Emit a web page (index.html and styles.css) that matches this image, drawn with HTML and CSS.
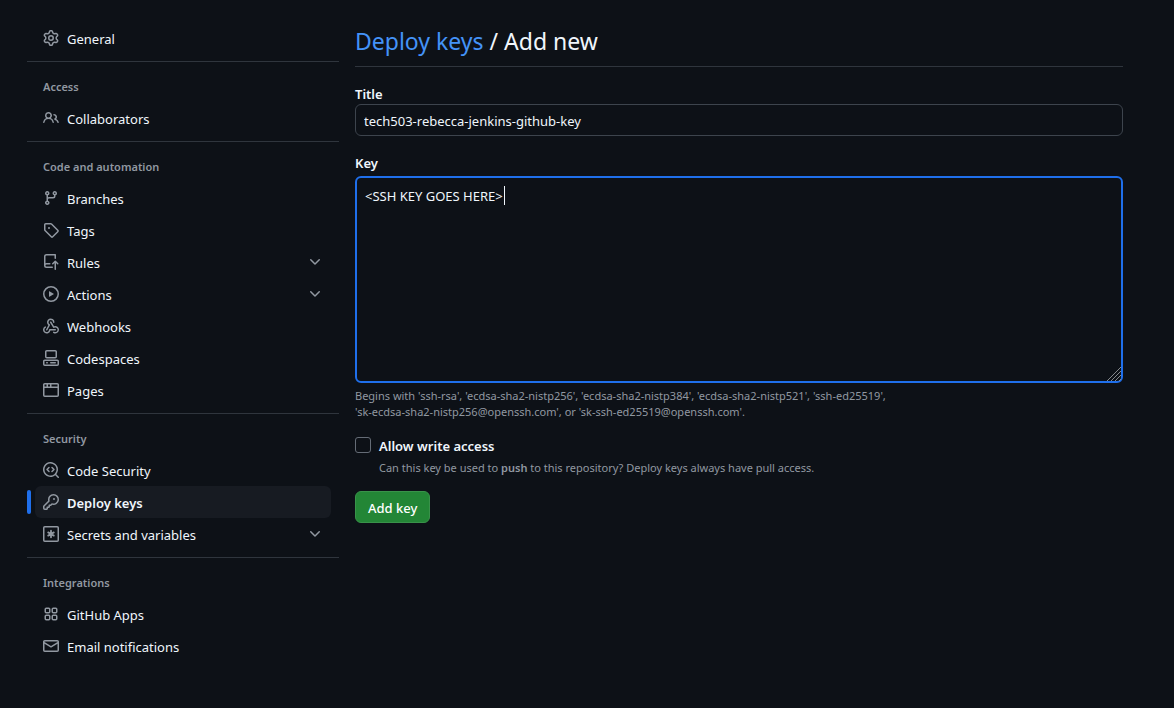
FILE: index.html
```
<!DOCTYPE html>
<html lang="en">
<head>
<meta charset="utf-8">
<meta name="viewport" content="width=device-width, initial-scale=1">
<title>Deploy keys / Add new</title>
<link rel="stylesheet" href="styles.css">
</head>
<body>
<svg class="sprite" aria-hidden="true">
  <symbol id="gear" viewBox="0 0 16 16"><path d="M8 0a8.2 8.2 0 0 1 .701.031C9.444.095 9.99.645 10.16 1.29l.288 1.107c.018.066.079.158.212.224.231.114.454.243.668.386.123.082.233.09.299.071l1.103-.303c.644-.176 1.392.021 1.82.63.27.385.506.792.704 1.218.315.675.111 1.422-.364 1.891l-.814.806c-.049.048-.098.147-.088.294.016.257.016.515 0 .772-.01.147.038.246.088.294l.814.806c.475.469.679 1.216.364 1.891a7.977 7.977 0 0 1-.704 1.217c-.428.61-1.176.807-1.82.63l-1.102-.302c-.067-.019-.177-.011-.3.071a5.909 5.909 0 0 1-.668.386c-.133.066-.194.158-.211.224l-.29 1.106c-.168.646-.715 1.196-1.458 1.26a8.006 8.006 0 0 1-1.402 0c-.743-.064-1.289-.614-1.458-1.26l-.289-1.106c-.018-.066-.079-.158-.212-.224a5.738 5.738 0 0 1-.668-.386c-.123-.082-.233-.09-.299-.071l-1.103.303c-.644.176-1.392-.021-1.82-.63a8.12 8.12 0 0 1-.704-1.218c-.315-.675-.111-1.422.363-1.891l.815-.806c.05-.048.098-.147.088-.294a6.214 6.214 0 0 1 0-.772c.01-.147-.038-.246-.088-.294l-.815-.806C.635 6.045.431 5.298.746 4.623a7.92 7.92 0 0 1 .704-1.217c.428-.61 1.176-.807 1.82-.63l1.102.302c.067.019.177.011.3-.071.214-.143.437-.272.668-.386.133-.066.194-.158.211-.224l.29-1.106C6.009.645 6.556.095 7.299.03 7.53.01 7.764 0 8 0Zm-.571 1.525c-.036.003-.108.036-.137.146l-.289 1.105c-.147.561-.549.967-.998 1.189-.173.086-.34.183-.5.29-.417.278-.97.423-1.529.27l-1.103-.303c-.109-.03-.175.016-.195.045-.22.312-.412.644-.573.99-.014.031-.021.11.059.19l.815.806c.411.406.562.957.53 1.456a4.709 4.709 0 0 0 0 .582c.032.499-.119 1.05-.53 1.456l-.815.806c-.081.08-.073.159-.059.19.162.346.353.677.573.989.02.03.085.076.195.046l1.102-.303c.56-.153 1.113-.008 1.53.27.161.107.328.204.501.29.447.222.85.629.997 1.189l.289 1.105c.029.109.101.143.137.146a6.6 6.6 0 0 0 1.142 0c.036-.003.108-.036.137-.146l.289-1.105c.147-.561.549-.967.998-1.189.173-.086.34-.183.5-.29.417-.278.97-.423 1.529-.27l1.103.303c.109.029.175-.016.195-.045.22-.313.411-.644.573-.99.014-.031.021-.11-.059-.19l-.815-.806c-.411-.406-.562-.957-.53-1.456a4.709 4.709 0 0 0 0-.582c-.032-.499.119-1.05.53-1.456l.815-.806c.081-.08.073-.159.059-.19a6.464 6.464 0 0 0-.573-.989c-.02-.03-.085-.076-.195-.046l-1.102.303c-.56.153-1.113.008-1.53-.27a4.44 4.44 0 0 0-.501-.29c-.447-.222-.85-.629-.997-1.189l-.289-1.105c-.029-.11-.101-.143-.137-.146a6.6 6.6 0 0 0-1.142 0ZM11 8a3 3 0 1 1-6 0 3 3 0 0 1 6 0ZM9.5 8a1.5 1.5 0 1 0-3.001.001A1.5 1.5 0 0 0 9.5 8Z"/></symbol>
  <symbol id="people" viewBox="0 0 16 16"><path d="M2 5.5a3.5 3.5 0 1 1 5.898 2.549 5.508 5.508 0 0 1 3.034 4.084.75.75 0 1 1-1.482.235 4 4 0 0 0-7.9 0 .75.75 0 0 1-1.482-.236A5.507 5.507 0 0 1 3.102 8.05 3.493 3.493 0 0 1 2 5.5ZM11 4a3.001 3.001 0 0 1 2.22 5.018 5.01 5.01 0 0 1 2.56 3.012.749.749 0 0 1-.885.954.752.752 0 0 1-.549-.514 3.507 3.507 0 0 0-2.522-2.372.75.75 0 0 1-.574-.73v-.352a.75.75 0 0 1 .416-.672A1.5 1.5 0 0 0 11 5.5.75.75 0 0 1 11 4Zm-5.5-.5a2 2 0 1 0-.001 3.999A2 2 0 0 0 5.5 3.5Z"/></symbol>
  <symbol id="branch" viewBox="0 0 16 16"><path d="M9.5 3.25a2.25 2.25 0 1 1 3 2.122V6A2.5 2.5 0 0 1 10 8.5H6a1 1 0 0 0-1 1v1.128a2.251 2.251 0 1 1-1.5 0V5.372a2.25 2.25 0 1 1 1.5 0v1.836A2.493 2.493 0 0 1 6 7h4a1 1 0 0 0 1-1v-.628A2.25 2.25 0 0 1 9.5 3.25Zm-6 0a.75.75 0 1 0 1.5 0 .75.75 0 0 0-1.5 0Zm8.25-.75a.75.75 0 1 0 0 1.5.75.75 0 0 0 0-1.5ZM4.25 12a.75.75 0 1 0 0 1.5.75.75 0 0 0 0-1.5Z"/></symbol>
  <symbol id="tag" viewBox="0 0 16 16"><path d="M1 7.775V2.75C1 1.784 1.784 1 2.75 1h5.025c.464 0 .91.184 1.238.513l6.25 6.25a1.75 1.75 0 0 1 0 2.474l-5.026 5.026a1.75 1.75 0 0 1-2.474 0l-6.25-6.25A1.752 1.752 0 0 1 1 7.775Zm1.5 0c0 .066.026.13.073.177l6.25 6.25a.25.25 0 0 0 .354 0l5.025-5.025a.25.25 0 0 0 0-.354l-6.25-6.25a.25.25 0 0 0-.177-.073H2.75a.25.25 0 0 0-.25.25ZM6 5a1 1 0 1 1 0 2 1 1 0 0 1 0-2Z"/></symbol>
  <symbol id="rules" viewBox="0 0 16 16"><path d="M1 2.5A2.5 2.5 0 0 1 3.5 0h8.75a.75.75 0 0 1 .75.75v3.5a.75.75 0 0 1-1.5 0V1.5h-8a1 1 0 0 0-1 1v6.708A2.493 2.493 0 0 1 3.5 9h3.25a.75.75 0 0 1 0 1.5H3.5a1 1 0 0 0 0 2h5.75a.75.75 0 0 1 0 1.5H3.5A2.5 2.5 0 0 1 1 11.5Zm13.23 7.79h-.001l-1.224-1.224v6.184a.75.75 0 0 1-1.5 0V9.066L10.28 10.29a.75.75 0 0 1-1.06-1.061l2.505-2.504a.75.75 0 0 1 1.06 0L15.29 9.23a.751.751 0 0 1-.018 1.042.751.751 0 0 1-1.042.018Z"/></symbol>
  <symbol id="play" viewBox="0 0 16 16"><path d="M8 0a8 8 0 1 1 0 16A8 8 0 0 1 8 0ZM1.5 8a6.5 6.5 0 1 0 13 0 6.5 6.5 0 0 0-13 0Zm4.879-2.773 4.264 2.559a.25.25 0 0 1 0 .428l-4.264 2.559A.25.25 0 0 1 6 10.559V5.442a.25.25 0 0 1 .379-.215Z"/></symbol>
  <symbol id="webhook" viewBox="0 0 16 16"><path d="M5.5 4.25a2.25 2.25 0 0 1 4.5 0 .75.75 0 0 0 1.5 0 3.75 3.75 0 1 0-6.14 2.889l-2.272 4.258a.75.75 0 0 0 1.324.706L7 7.25a.75.75 0 0 0-.309-1.015A2.25 2.25 0 0 1 5.5 4.25Z"/><path d="M7.364 3.607a.75.75 0 0 1 1.03.257l2.608 4.349a3.75 3.75 0 1 1-.628 6.785.75.75 0 0 1 .752-1.299 2.25 2.25 0 1 0-.033-3.88.75.75 0 0 1-1.03-.256L7.107 4.636a.75.75 0 0 1 .257-1.03Z"/><path d="M2.9 8.776A.75.75 0 0 1 2.625 9.8 2.25 2.25 0 1 0 6 11.75a.75.75 0 0 1 .75-.751h5.5a.75.75 0 0 1 0 1.5H7.425a3.751 3.751 0 1 1-5.55-3.998.75.75 0 0 1 1.024.274Z"/></symbol>
  <symbol id="codespaces" viewBox="0 0 16 16"><path d="M0 11.25c0-.966.784-1.75 1.75-1.75h12.5c.966 0 1.75.784 1.75 1.75v3A1.75 1.75 0 0 1 14.25 16H1.75A1.75 1.75 0 0 1 0 14.25Zm2-9.5C2 .784 2.784 0 3.75 0h8.5C13.216 0 14 .784 14 1.75v5a1.75 1.75 0 0 1-1.75 1.75h-8.5A1.75 1.75 0 0 1 2 6.75Zm1.75-.25a.25.25 0 0 0-.25.25v5c0 .138.112.25.25.25h8.5a.25.25 0 0 0 .25-.25v-5a.25.25 0 0 0-.25-.25Zm-2 9.5a.25.25 0 0 0-.25.25v3c0 .138.112.25.25.25h12.5a.25.25 0 0 0 .25-.25v-3a.25.25 0 0 0-.25-.25Z"/><path d="M7 12.75a.75.75 0 0 1 .75-.75h4.5a.75.75 0 0 1 0 1.5h-4.5a.75.75 0 0 1-.75-.75Zm-4 0a.75.75 0 0 1 .75-.75h.5a.75.75 0 0 1 0 1.5h-.5a.75.75 0 0 1-.75-.75Z"/></symbol>
  <symbol id="browser" viewBox="0 0 16 16"><path d="M0 2.75C0 1.784.784 1 1.75 1h12.5c.966 0 1.75.784 1.75 1.75v10.5A1.75 1.75 0 0 1 14.25 15H1.75A1.75 1.75 0 0 1 0 13.25ZM14.5 6h-13v7.25c0 .138.112.25.25.25h12.5a.25.25 0 0 0 .25-.25Zm-6-3.5v2h6V2.75a.25.25 0 0 0-.25-.25ZM5 2.5v2h2v-2Zm-3.25 0a.25.25 0 0 0-.25.25V4.5h2v-2Z"/></symbol>
  <symbol id="codescan" viewBox="0 0 16 16"><path d="M8.47 4.97a.75.75 0 0 0 0 1.06L9.94 7.5 8.47 8.97a.75.75 0 1 0 1.06 1.06l2-2a.75.75 0 0 0 0-1.06l-2-2a.75.75 0 0 0-1.06 0ZM6.53 6.03a.75.75 0 0 0-1.06-1.06l-2 2a.75.75 0 0 0 0 1.06l2 2a.75.75 0 1 0 1.06-1.06L5.06 7.5l1.47-1.47Z"/><path d="M12.246 13.307a7.501 7.501 0 1 1 1.06-1.06l2.474 2.473a.75.75 0 1 1-1.06 1.06l-2.474-2.473ZM1.5 7.5a6.002 6.002 0 0 0 3.608 5.504 6.002 6.002 0 0 0 6.486-1.117.748.748 0 0 1 .292-.293A6 6 0 1 0 1.5 7.5Z"/></symbol>
  <symbol id="key-icon" viewBox="0 0 16 16"><path d="M10.5 0a5.499 5.499 0 1 1-1.288 10.848l-.932.932a.749.749 0 0 1-.53.22H7v.75a.749.749 0 0 1-.22.53l-.5.5a.749.749 0 0 1-.53.22H5v.75a.749.749 0 0 1-.22.53l-.5.5a.749.749 0 0 1-.53.22h-2A1.75 1.75 0 0 1 0 14.25v-2c0-.199.079-.389.22-.53l4.932-4.932A5.5 5.5 0 0 1 10.5 0Zm-4 5.5c-.001.431.069.86.205 1.269a.75.75 0 0 1-.181.768L1.5 12.56v1.69c0 .138.112.25.25.25h1.69l.06-.06v-1.19a.75.75 0 0 1 .75-.75h1.19l.06-.06v-1.19a.75.75 0 0 1 .75-.75h1.19l1.023-1.025a.75.75 0 0 1 .768-.18A4 4 0 1 0 6.5 5.5ZM11 6a1 1 0 1 1 0-2 1 1 0 0 1 0 2Z"/></symbol>
  <symbol id="asterisk" viewBox="0 0 16 16"><g fill="none" stroke="currentColor" stroke-width="1.5" stroke-linecap="round"><rect x=".75" y=".75" width="14.5" height="14.5" rx="1"/><path stroke-width="1.8" d="M8 4.75v6.5M5.2 6.4l5.6 3.2M10.8 6.4l-5.6 3.2"/></g></symbol>
  <symbol id="apps" viewBox="0 0 16 16"><g fill="none" stroke="currentColor" stroke-width="1.5"><rect x="2.25" y="2.25" width="4.5" height="4.5" rx="1"/><rect x="9.25" y="2.25" width="4.5" height="4.5" rx="1"/><rect x="2.25" y="9.25" width="4.5" height="4.5" rx="1"/><rect x="9.25" y="9.25" width="4.5" height="4.5" rx="1"/></g></symbol>
  <symbol id="mail" viewBox="0 0 16 16"><path d="M1.75 2h12.5c.966 0 1.75.784 1.75 1.75v8.5A1.75 1.75 0 0 1 14.25 14H1.75A1.75 1.75 0 0 1 0 12.25v-8.5C0 2.784.784 2 1.75 2ZM1.5 12.251c0 .138.112.25.25.25h12.5a.25.25 0 0 0 .25-.25V5.809L8.38 9.397a.75.75 0 0 1-.76 0L1.5 5.809v6.442Zm13-8.181v-.32a.25.25 0 0 0-.25-.25H1.75a.25.25 0 0 0-.25.25v.32L8 7.88Z"/></symbol>
  <symbol id="chevron" viewBox="0 0 16 16"><path d="M12.78 5.22a.749.749 0 0 1 0 1.06l-4.25 4.25a.749.749 0 0 1-1.06 0L3.22 6.28a.749.749 0 1 1 1.06-1.06L8 8.939l3.72-3.719a.749.749 0 0 1 1.06 0Z"/></symbol>
</svg>
<div class="layout">
  <nav class="sidebar" aria-label="Repository settings">
    <section class="group">
      <a class="item" href="#"><svg class="icon"><use href="#gear"/></svg><span class="name">General</span></a>
    </section>
    <section class="group">
      <h2 class="group-title">Access</h2>
      <a class="item" href="#"><svg class="icon"><use href="#people"/></svg><span class="name">Collaborators</span></a>
    </section>
    <section class="group">
      <h2 class="group-title">Code and automation</h2>
      <a class="item" href="#"><svg class="icon"><use href="#branch"/></svg><span class="name">Branches</span></a>
      <a class="item" href="#"><svg class="icon"><use href="#tag"/></svg><span class="name">Tags</span></a>
      <button class="item" type="button" aria-expanded="false"><svg class="icon"><use href="#rules"/></svg><span class="name">Rules</span><svg class="icon"><use href="#chevron"/></svg></button>
      <button class="item" type="button" aria-expanded="false"><svg class="icon"><use href="#play"/></svg><span class="name">Actions</span><svg class="icon"><use href="#chevron"/></svg></button>
      <a class="item" href="#"><svg class="icon"><use href="#webhook"/></svg><span class="name">Webhooks</span></a>
      <a class="item" href="#"><svg class="icon"><use href="#codespaces"/></svg><span class="name">Codespaces</span></a>
      <a class="item" href="#"><svg class="icon"><use href="#browser"/></svg><span class="name">Pages</span></a>
    </section>
    <section class="group">
      <h2 class="group-title">Security</h2>
      <a class="item" href="#"><svg class="icon"><use href="#codescan"/></svg><span class="name">Code Security</span></a>
      <a class="item current" href="#" aria-current="page"><svg class="icon"><use href="#key-icon"/></svg><span class="name">Deploy keys</span></a>
      <button class="item" type="button" aria-expanded="false"><svg class="icon"><use href="#asterisk"/></svg><span class="name">Secrets and variables</span><svg class="icon"><use href="#chevron"/></svg></button>
    </section>
    <section class="group">
      <h2 class="group-title">Integrations</h2>
      <a class="item" href="#"><svg class="icon"><use href="#apps"/></svg><span class="name">GitHub Apps</span></a>
      <a class="item" href="#"><svg class="icon"><use href="#mail"/></svg><span class="name">Email notifications</span></a>
    </section>
  </nav>
  <main class="main">
    <h1 class="heading"><a href="#">Deploy keys</a> / Add new</h1>
    <form class="form">
      <div class="field">
        <label for="title">Title</label>
        <input class="text-input" id="title" type="text" value="tech503-rebecca-jenkins-github-key">
      </div>
      <div class="field key-field">
        <label for="key">Key</label>
        <div class="key-box">
          <textarea id="key" aria-describedby="key-hint" spellcheck="false">&lt;SSH KEY GOES HERE&gt;</textarea>
          <span class="caret"></span>
          <svg class="grip" viewBox="0 0 15 15" aria-hidden="true"><path d="M1 15 15 1M5 15 15 5M9 15l6-6M13 15l2-2"/></svg>
        </div>
        <p class="note" id="key-hint">Begins with 'ssh-rsa', 'ecdsa-sha2-nistp256', 'ecdsa-sha2-nistp384', 'ecdsa-sha2-nistp521', 'ssh-ed25519', <br>'sk-ecdsa-sha2-nistp256@openssh.com', or 'sk-ssh-ed25519@openssh.com'.</p>
      </div>
      <div class="check">
        <input type="checkbox" id="write" aria-describedby="write-hint">
        <div>
          <label for="write">Allow write access</label>
          <p class="note" id="write-hint">Can this key be used to <strong>push</strong> to this repository? Deploy keys always have pull access.</p>
        </div>
      </div>
      <button class="submit" type="button">Add key</button>
    </form>
  </main>
</div>
</body>
</html>
```
FILE: styles.css
```
* { box-sizing: border-box; }

body {
  margin: 0;
  background: #0d1117;
  color: #f0f6fc;
  font-family: "Noto Sans", "Open Sans", sans-serif;
  font-size: 13px;
  line-height: 20px;
}

h1, h2, p { margin: 0; }
a { text-decoration: none; }
input, textarea, button { font: inherit; color: inherit; }

.sprite { display: none; }

.layout {
  display: flex;
  gap: 16px;
  padding: 22px 51px 22px 27px;
}

/* Sidebar */
.sidebar { flex: 0 0 312px; }

.group + .group {
  margin-top: 7px;
  padding-top: 8px;
  border-top: 1px solid #2f353d;
}

.group-title {
  padding: 9px 16px 7px;
  color: #9198a1;
  font-size: 11px;
  font-weight: 600;
  line-height: 16px;
}

.item {
  position: relative;
  display: flex;
  align-items: center;
  gap: 8px;
  width: 296px;
  height: 32px;
  margin: 0 8px;
  padding: 0 8px;
  border: 0;
  border-radius: 6px;
  background: none;
  color: #f0f6fc;
  text-align: left;
}

.name { flex: 1; padding-top: 2px; }

.icon {
  flex: none;
  width: 16px;
  height: 16px;
  color: #9198a1;
  fill: currentColor;
}

.current {
  background: #171b22;
  font-weight: 600;
}

.current::before {
  content: "";
  position: absolute;
  top: 4px;
  left: -8px;
  width: 4px;
  height: 24px;
  border-radius: 6px;
  background: #1f6feb;
}

/* Form */
.main { flex: 1; min-width: 0; }

.heading {
  padding: 2px 0 8px;
  border-bottom: 1px solid #2f353d;
  font-size: 23px;
  font-weight: 400;
  line-height: 34px;
}

.heading a { color: #4493f8; }

.form { padding-top: 17px; }
.field label, .check label { font-weight: 600; }
.field label { display: block; }

.text-input {
  display: block;
  width: 100%;
  height: 32px;
  padding: 2px 8px 0;
  border: 1px solid #3d444d;
  border-radius: 6px;
  background: #0d1117;
}

.key-field { margin-top: 17px; }
.key-box { position: relative; margin-top: 3px; }

.key-box textarea {
  display: block;
  width: 100%;
  height: 207px;
  padding: 8px;
  border: 2px solid #1f6feb;
  border-radius: 6px;
  outline: 0;
  resize: none;
  background: #0d1117;
}

.caret {
  position: absolute;
  top: 10px;
  left: 149px;
  width: 1px;
  height: 19px;
  background: #f0f6fc;
}

.grip {
  position: absolute;
  right: 2px;
  bottom: 2px;
  width: 15px;
  height: 15px;
  fill: none;
  stroke: #85888c;
}

.note {
  color: #9198a1;
  font-size: 11px;
  line-height: 16px;
}

.key-field .note { margin-top: 5px; }

.check {
  display: flex;
  gap: 8px;
  margin-top: 16px;
}

.check input {
  appearance: none;
  flex: none;
  width: 16px;
  height: 16px;
  margin: 1px 0 0;
  border: 1px solid #656c76;
  border-radius: 3px;
}

.check .note { margin-top: 4px; }
.check strong { font-weight: 600; }

.submit {
  height: 32px;
  margin-top: 15px;
  padding: 2px 12px 0;
  border: 1px solid #39924a;
  border-radius: 6px;
  background: #238636;
  color: #ffffff;
  font-weight: 500;
}
```
